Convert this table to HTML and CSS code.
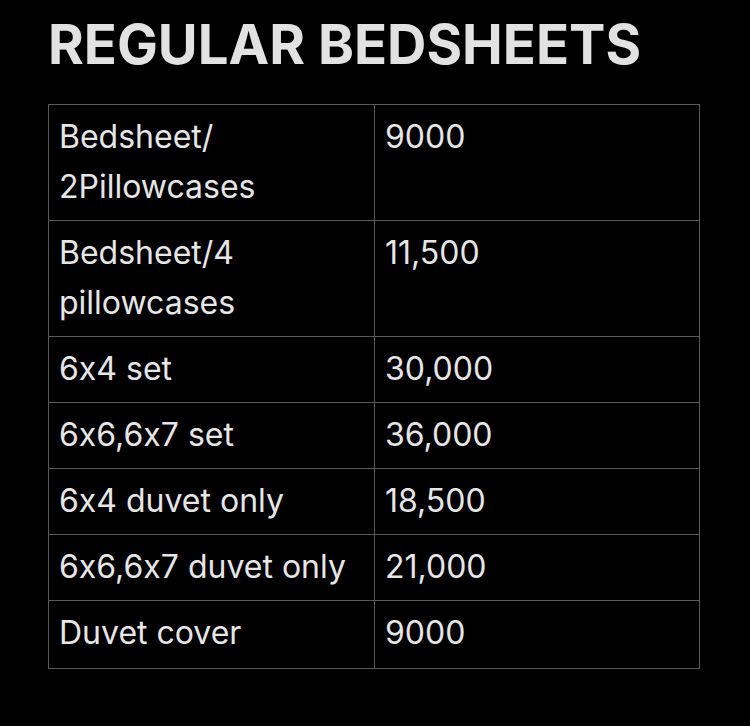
FILE: index.html
```html
<!DOCTYPE html>
<html>
<head>
<meta charset="utf-8">
<link rel="stylesheet" href="styles.css">
</head>
<body>
<div class="page">
  <h1 class="title">REGULAR BEDSHEETS</h1>
  <table class="prices">
    <tr><td class="name">Bedsheet/<br>2Pillowcases</td><td class="price">9000</td></tr>
    <tr><td class="name">Bedsheet/4<br>pillowcases</td><td class="price">11,500</td></tr>
    <tr><td class="name">6x4 set</td><td class="price">30,000</td></tr>
    <tr><td class="name">6x6,6x7 set</td><td class="price">36,000</td></tr>
    <tr><td class="name">6x4 duvet only</td><td class="price">18,500</td></tr>
    <tr><td class="name">6x6,6x7 duvet only</td><td class="price">21,000</td></tr>
    <tr><td class="name last">Duvet cover</td><td class="price last">9000</td></tr>
  </table>
</div>
</body>
</html>
```
FILE: styles.css
```css
html, body {
  margin: 0;
  padding: 0;
  background: #000;
}
body {
  width: 750px;
  height: 726px;
  overflow: hidden;
  font-family: Inter, "Noto Sans", sans-serif;
  font-feature-settings: "calt" 0;
  color: #e6e6e6;
}
.page {
  padding: 12px 0 0 48px;
}
.title {
  margin: 0;
  font-size: 54.5px;
  font-weight: 700;
  line-height: 64px;
  color: #e2e2e2;
  letter-spacing: 0;
}
.prices {
  margin-top: 28px;
  border-collapse: collapse;
  width: 652px;
  table-layout: fixed;
}
.prices td {
  border: 1px solid #5a5a5a;
  font-size: 32px;
  line-height: 50px;
  padding: 7px 10px 8px 10px;
  vertical-align: top;
}
.prices td.name {
  width: 305px;
}
.prices td.last {
  padding-bottom: 10px;
}
```
